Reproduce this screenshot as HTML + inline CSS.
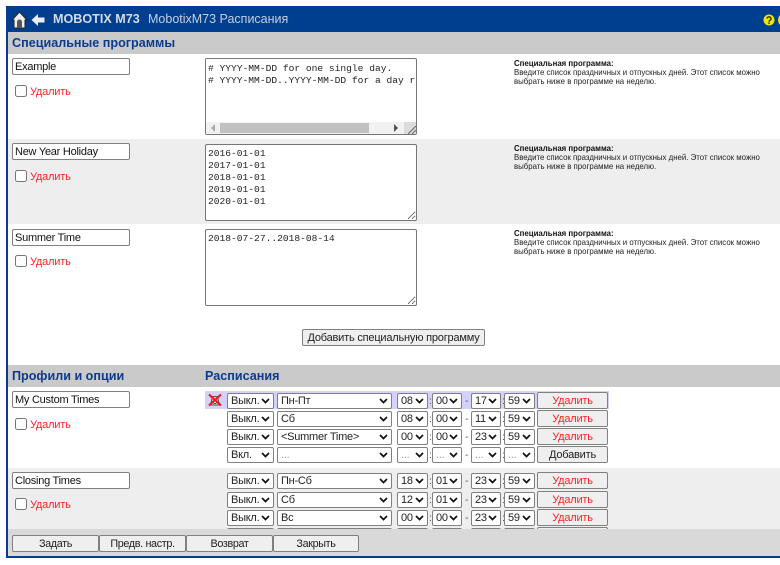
<!DOCTYPE html>
<html><head><meta charset="utf-8">
<style>
html,body{margin:0;padding:0;background:#fff;}
#p{position:relative;width:780px;height:565px;overflow:hidden;background:#fff;font-family:"Liberation Sans",sans-serif;}
#p div,#p span,#p svg,#p input,#p button,#p textarea{position:absolute;box-sizing:border-box;}
.h{font-weight:bold;font-size:12.6px;color:#0b3c8c;line-height:16px;white-space:nowrap;}
.t{left:12px;width:118px;height:17px;border:1px solid #808080;border-radius:2px;font:11px "Liberation Sans",sans-serif;letter-spacing:-.25px;padding:0 2px;background:#fff;color:#111;margin:0;outline:0;}
.c{left:15px;width:12px;height:12px;margin:0;}
.d{left:30px;color:#f22;font-size:11px;letter-spacing:-.2px;line-height:14px;white-space:nowrap;}
textarea{left:205px;width:212px;height:77px;font:9.6px/11.9px "Liberation Mono",monospace;color:#222;border:1px solid #767676;border-radius:2px;padding:3px 2px 2px;margin:0;white-space:pre;overflow:hidden;background:#fff;resize:both;}
.n{left:514px;width:265px;font-size:7.85px;line-height:9.2px;color:#222;}
.n b{display:block;color:#111;}
.s{height:16px;font-size:11px;letter-spacing:-.25px;line-height:14px;color:#222;padding-left:3px;border:1px solid #808080;border-radius:2px;background:#fff;white-space:nowrap;overflow:hidden;}
.s svg{right:3px;top:4px;}
.z{color:#999;}
.a{left:227px;width:47px}.b{left:277px;width:115px}.e{left:397px;width:31px}.f{left:432px;width:30px}.g{left:471px;width:30px}.i{left:504px;width:31px}
.m{font-size:10.5px;color:#555;line-height:14px;}
.k{left:537px;width:71px;height:17px;font:11px "Liberation Sans",sans-serif;letter-spacing:-.2px;color:#f22;background:#efefef;border:1px solid #808080;border-radius:2px;margin:0;padding:0;}
.q{top:535px;height:17px;font:10.8px "Liberation Sans",sans-serif;letter-spacing:-.35px;color:#222;background:#efefef;border:1px solid #808080;border-radius:2px;margin:0;padding:0;}
</style></head><body>
<div id="p">
<svg width="0" height="0" style="left:0;top:0"><defs><path id="v" d="M1 1l3.5 3.5L8 1" fill="none" stroke="#111" stroke-width="1.7"/></defs></svg>
<div style="left:6px;top:6px;width:774px;height:26px;background:#003f8f;"></div>
<svg style="left:11px;top:11px" width="17" height="18" viewBox="0 0 17 18"><path d="M8.5 1L1 9h2v8h11V9h2z" fill="#eee" stroke="#222" stroke-width="1"/><path d="M6 17v-6a2.5 2.5 0 0 1 5 0v6z" fill="#555"/></svg>
<svg style="left:31px;top:13px" width="14" height="14" viewBox="0 0 14 14"><path d="M0.5 7L7 1v3.5h6.5v5H7V13z" fill="#eee"/></svg>
<span style="left:53px;top:11px;font-weight:bold;font-size:12.6px;line-height:16px;color:#d5dce8;white-space:nowrap;">MOBOTIX M73</span>
<span style="left:148px;top:11px;font-size:12.5px;line-height:16px;color:#c4cfe2;white-space:nowrap;">MobotixM73 Расписания</span>
<svg style="left:763px;top:14px" width="12" height="12" viewBox="0 0 12 12"><circle cx="6" cy="6" r="5.5" fill="#f2e600"/><path d="M4 4.6a2 1.8 0 1 1 2.9 1.7C6.2 6.8 6 7 6 7.8" fill="none" stroke="#222" stroke-width="1.3"/><rect x="5.3" y="8.5" width="1.4" height="1.4" fill="#222"/></svg>
<div style="left:778px;top:14px;width:10px;height:12px;border-radius:50%;background:#f2e600;"></div>

<div style="left:6px;top:32px;width:2px;height:525px;background:#003f8f;"></div>
<div style="left:8px;top:32px;width:772px;height:22px;background:#cacaca;"></div>
<span class="h" style="left:12px;top:35px;">Специальные программы</span>

<div style="left:8px;top:139px;width:772px;height:85px;background:#eee;"></div>

<input class="t" style="top:58px" value="Example">
<input type="checkbox" class="c" style="top:85px"><span class="d" style="top:85px">Удалить</span>
<textarea style="top:58px;padding-top:4px;resize:none">
# YYYY-MM-DD for one single day.
# YYYY-MM-DD..YYYY-MM-DD for a day r</textarea>
<div style="left:206px;top:122px;width:210px;height:12px;background:#f1f1f1;"></div>
<div style="left:220px;top:123px;width:149px;height:10px;background:#c1c1c1;"></div>
<svg style="left:210px;top:124px" width="6" height="8"><path d="M5 0v8L1 4z" fill="#aaa"/></svg>
<svg style="left:393px;top:124px" width="6" height="8"><path d="M1 0v8l4-4z" fill="#505050"/></svg>
<div style="left:404px;top:122px;width:12px;height:12px;background:#dcdcdc;"></div>
<svg style="left:408px;top:126px" width="8" height="8"><path d="M0 8L8 0M4 8L8 4" stroke="#666" fill="none"/></svg>
<div class="n" style="top:59px"><b>Специальная программа:</b>Введите список праздничных и отпускных дней. Этот список можно<br>выбрать ниже в программе на неделю.</div>

<input class="t" style="top:143px" value="New Year Holiday">
<input type="checkbox" class="c" style="top:170px"><span class="d" style="top:170px">Удалить</span>
<textarea style="top:144px">2016-01-01
2017-01-01
2018-01-01
2019-01-01
2020-01-01</textarea>
<div class="n" style="top:144px"><b>Специальная программа:</b>Введите список праздничных и отпускных дней. Этот список можно<br>выбрать ниже в программе на неделю.</div>

<input class="t" style="top:229px" value="Summer Time">
<input type="checkbox" class="c" style="top:255px"><span class="d" style="top:255px">Удалить</span>
<textarea style="top:229px">2018-07-27..2018-08-14</textarea>
<div class="n" style="top:229px"><b>Специальная программа:</b>Введите список праздничных и отпускных дней. Этот список можно<br>выбрать ниже в программе на неделю.</div>

<button style="left:302px;top:329px;width:183px;height:17px;font:11px 'Liberation Sans',sans-serif;letter-spacing:-.2px;white-space:nowrap;color:#222;background:#efefef;border:1px solid #808080;border-radius:2px;padding:0;margin:0;">Добавить специальную программу</button>

<div style="left:8px;top:365px;width:772px;height:22px;background:#cacaca;"></div>
<span class="h" style="left:12px;top:368px;">Профили и опции</span>
<span class="h" style="left:205px;top:368px;">Расписания</span>

<input class="t" style="top:391px" value="My Custom Times">
<input type="checkbox" class="c" style="top:418px"><span class="d" style="top:418px">Удалить</span>

<div style="left:205px;top:391px;width:404px;height:18px;background:#d2d2fa;"></div>
<svg style="left:208px;top:393px" width="14" height="14" viewBox="0 0 14 14"><path d="M4.5 3.5h5l2 8.5h-9z" fill="#ddd" stroke="#555"/><circle cx="7" cy="9" r="1.6" fill="#fff" stroke="#555"/><path d="M1 1.5l12 11M13 1.5L1 12.500" stroke="#f01818" stroke-width="2.200"/></svg>

<div class="s a" style="top:393px">Выкл.<svg width="9" height="6"><use href="#v"/></svg></div><div class="s b" style="top:393px">Пн-Пт<svg width="9" height="6"><use href="#v"/></svg></div><div class="s e" style="top:393px">08<svg width="9" height="6"><use href="#v"/></svg></div><div class="s f" style="top:393px">00<svg width="9" height="6"><use href="#v"/></svg></div><div class="s g" style="top:393px">17<svg width="9" height="6"><use href="#v"/></svg></div><div class="s i" style="top:393px">59<svg width="9" height="6"><use href="#v"/></svg></div><button class="k" style="top:392px">Удалить</button>
<span class="m" style="left:429px;top:394px">:</span><span class="m" style="left:465px;top:394px">-</span><span class="m" style="left:502px;top:394px">:</span>

<div class="s a" style="top:411px">Выкл.<svg width="9" height="6"><use href="#v"/></svg></div><div class="s b" style="top:411px">Сб<svg width="9" height="6"><use href="#v"/></svg></div><div class="s e" style="top:411px">08<svg width="9" height="6"><use href="#v"/></svg></div><div class="s f" style="top:411px">00<svg width="9" height="6"><use href="#v"/></svg></div><div class="s g" style="top:411px">11<svg width="9" height="6"><use href="#v"/></svg></div><div class="s i" style="top:411px">59<svg width="9" height="6"><use href="#v"/></svg></div><button class="k" style="top:410px">Удалить</button>
<span class="m" style="left:429px;top:412px">:</span><span class="m" style="left:465px;top:412px">-</span><span class="m" style="left:502px;top:412px">:</span>

<div class="s a" style="top:429px">Выкл.<svg width="9" height="6"><use href="#v"/></svg></div><div class="s b" style="top:429px">&lt;Summer Time&gt;<svg width="9" height="6"><use href="#v"/></svg></div><div class="s e" style="top:429px">00<svg width="9" height="6"><use href="#v"/></svg></div><div class="s f" style="top:429px">00<svg width="9" height="6"><use href="#v"/></svg></div><div class="s g" style="top:429px">23<svg width="9" height="6"><use href="#v"/></svg></div><div class="s i" style="top:429px">59<svg width="9" height="6"><use href="#v"/></svg></div><button class="k" style="top:428px">Удалить</button>
<span class="m" style="left:429px;top:430px">:</span><span class="m" style="left:465px;top:430px">-</span><span class="m" style="left:502px;top:430px">:</span>

<div class="s a" style="top:447px">Вкл.<svg width="9" height="6"><use href="#v"/></svg></div><div class="s b z" style="top:447px">...<svg width="9" height="6"><use href="#v"/></svg></div><div class="s e z" style="top:447px">...<svg width="9" height="6"><use href="#v"/></svg></div><div class="s f z" style="top:447px">...<svg width="9" height="6"><use href="#v"/></svg></div><div class="s g z" style="top:447px">...<svg width="9" height="6"><use href="#v"/></svg></div><div class="s i z" style="top:447px">...<svg width="9" height="6"><use href="#v"/></svg></div><button class="k" style="top:446px;color:#222">Добавить</button>
<span class="m" style="left:429px;top:448px">:</span><span class="m" style="left:465px;top:448px">-</span><span class="m" style="left:502px;top:448px">:</span>

<div style="left:8px;top:468px;width:772px;height:61px;background:#eee;"></div>
<input class="t" style="top:472px" value="Closing Times">
<input type="checkbox" class="c" style="top:498px"><span class="d" style="top:498px">Удалить</span>

<div class="s a" style="top:473px">Выкл.<svg width="9" height="6"><use href="#v"/></svg></div><div class="s b" style="top:473px">Пн-Сб<svg width="9" height="6"><use href="#v"/></svg></div><div class="s e" style="top:473px">18<svg width="9" height="6"><use href="#v"/></svg></div><div class="s f" style="top:473px">01<svg width="9" height="6"><use href="#v"/></svg></div><div class="s g" style="top:473px">23<svg width="9" height="6"><use href="#v"/></svg></div><div class="s i" style="top:473px">59<svg width="9" height="6"><use href="#v"/></svg></div><button class="k" style="top:472px">Удалить</button>
<span class="m" style="left:429px;top:474px">:</span><span class="m" style="left:465px;top:474px">-</span><span class="m" style="left:502px;top:474px">:</span>

<div class="s a" style="top:492px">Выкл.<svg width="9" height="6"><use href="#v"/></svg></div><div class="s b" style="top:492px">Сб<svg width="9" height="6"><use href="#v"/></svg></div><div class="s e" style="top:492px">12<svg width="9" height="6"><use href="#v"/></svg></div><div class="s f" style="top:492px">01<svg width="9" height="6"><use href="#v"/></svg></div><div class="s g" style="top:492px">23<svg width="9" height="6"><use href="#v"/></svg></div><div class="s i" style="top:492px">59<svg width="9" height="6"><use href="#v"/></svg></div><button class="k" style="top:491px">Удалить</button>
<span class="m" style="left:429px;top:493px">:</span><span class="m" style="left:465px;top:493px">-</span><span class="m" style="left:502px;top:493px">:</span>

<div class="s a" style="top:510px">Выкл.<svg width="9" height="6"><use href="#v"/></svg></div><div class="s b" style="top:510px">Вс<svg width="9" height="6"><use href="#v"/></svg></div><div class="s e" style="top:510px">00<svg width="9" height="6"><use href="#v"/></svg></div><div class="s f" style="top:510px">00<svg width="9" height="6"><use href="#v"/></svg></div><div class="s g" style="top:510px">23<svg width="9" height="6"><use href="#v"/></svg></div><div class="s i" style="top:510px">59<svg width="9" height="6"><use href="#v"/></svg></div><button class="k" style="top:509px">Удалить</button>
<span class="m" style="left:429px;top:511px">:</span><span class="m" style="left:465px;top:511px">-</span><span class="m" style="left:502px;top:511px">:</span>

<div class="s a" style="top:528px"></div><div class="s b" style="top:528px"></div><div class="s e" style="top:528px"></div><div class="s f" style="top:528px"></div><div class="s g" style="top:528px"></div><div class="s i" style="top:528px"></div><button class="k" style="top:527px"></button>

<div style="left:8px;top:529px;width:772px;height:27px;background:#d9d9d9;"></div>
<div style="left:6px;top:556px;width:774px;height:2px;background:#003f8f;"></div>
<button class="q" style="left:12px;width:87px;">Задать</button>
<button class="q" style="left:99px;width:87px;">Предв. настр.</button>
<button class="q" style="left:186px;width:87px;">Возврат</button>
<button class="q" style="left:273px;width:86px;">Закрыть</button>
</div>
</body></html>
